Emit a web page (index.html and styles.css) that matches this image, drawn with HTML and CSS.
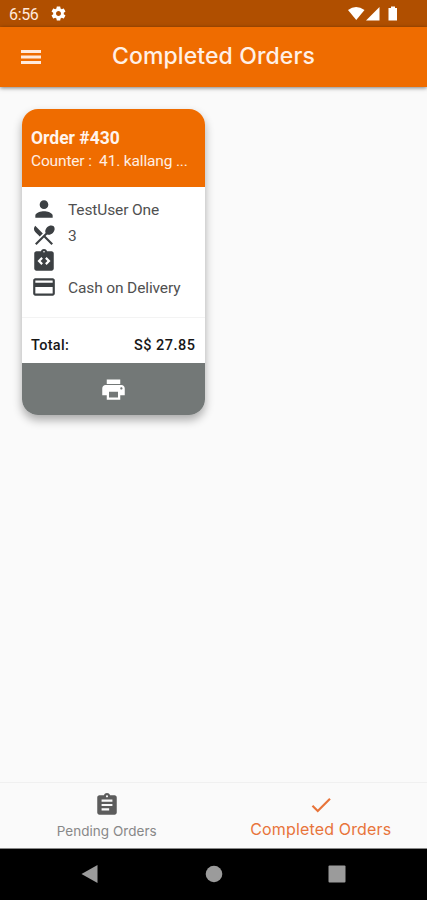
FILE: index.html
```html
<!DOCTYPE html>
<html lang="en">
<head>
<meta charset="utf-8">
<title>Completed Orders</title>
<link rel="stylesheet" href="styles.css">
</head>
<body>
<div class="status">
  <span class="clock">6:56</span>
  <svg class="gear" viewBox="0 0 24 24"><path d="M19.43 12.98c.04-.32.07-.64.07-.98s-.03-.66-.07-.98l2.11-1.65c.19-.15.24-.42.12-.64l-2-3.46c-.12-.22-.39-.3-.61-.22l-2.49 1c-.52-.4-1.08-.73-1.69-.98l-.38-2.65C14.46 2.18 14.25 2 14 2h-4c-.25 0-.46.18-.49.42l-.38 2.65c-.61.25-1.17.59-1.69.98l-2.49-1c-.23-.09-.49 0-.61.22l-2 3.46c-.13.22-.07.49.12.64l2.11 1.65c-.04.32-.07.65-.07.98s.03.66.07.98l-2.11 1.65c-.19.15-.24.42-.12.64l2 3.46c.12.22.39.3.61.22l2.49-1c.52.4 1.08.73 1.69.98l.38 2.65c.03.24.24.42.49.42h4c.25 0 .46-.18.49-.42l.38-2.65c.61-.25 1.17-.59 1.69-.98l2.49 1c.23.09.49 0 .61-.22l2-3.46c.12-.22.07-.49-.12-.64l-2.11-1.65zM12 15.500c-1.930 0-3.500-1.570-3.500-3.500s1.570-3.500 3.500-3.500 3.500 1.570 3.500 3.500-1.570 3.500-3.500 3.500z"/></svg>
  <svg class="signals" viewBox="0 0 50 16"><path d="M0 4Q8 -2 16.500 4L8.250 14Z"/><path d="M18 14.500L31.500 1V14.500Z"/><path d="M43 .5h4v1.500h2v12.500h-8.500V2h2.500z"/></svg>
</div>
<header class="appbar">
  <svg class="menu" viewBox="0 0 20 14"><path d="M0 0h20v3H0zM0 5.500h20v3H0zM0 11h20v3H0z"/></svg>
  <h1>Completed Orders</h1>
</header>
<main>
  <article class="card">
    <div class="card-head">
      <div class="order">Order #430</div>
      <div class="counter">Counter :&nbsp; 41. kallang ...</div>
    </div>
    <div class="details">
      <div class="row"><svg viewBox="0 0 24 24"><path d="M12 12c2.210 0 4-1.790 4-4s-1.790-4-4-4-4 1.790-4 4 1.790 4 4 4zm0 2c-2.670 0-8 1.340-8 4v2h16v-2c0-2.660-5.330-4-8-4z"/></svg><span>TestUser One</span></div>
      <div class="row"><svg viewBox="0 0 24 24"><path d="M8.100 13.340l2.830-2.830L3.910 3.500c-1.560 1.560-1.560 4.090 0 5.660l4.190 4.180zm6.780-1.810c1.530.71 3.680.21 5.270-1.380 1.910-1.910 2.280-4.650.81-6.120-1.460-1.460-4.200-1.100-6.120.81-1.590 1.590-2.090 3.740-1.380 5.270L3.700 19.870l1.410 1.410L12 14.410l6.880 6.880 1.410-1.410L13.410 13l1.470-1.470z"/></svg><span>3</span></div>
      <div class="row"><svg viewBox="0 0 24 24"><path fill-rule="evenodd" d="M19 3h-4.180C14.400 1.840 13.300 1 12 1s-2.400.84-2.820 2H5c-1.100 0-2 .9-2 2v14c0 1.100.9 2 2 2h14c1.100 0 2-.9 2-2V5c0-1.100-.9-2-2-2zM11 14.170L9.590 15.590 6 12l3.590-3.590L11 9.830 8.830 12zM12 4.250a.75.75 0 1 1 0-1.500.75.75 0 0 1 0 1.500zM14.410 15.590L13 14.170 15.170 12 13 9.830l1.410-1.420L18 12z"/></svg></div>
      <div class="row"><svg viewBox="0 0 24 24"><path d="M20 4H4c-1.110 0-1.990.89-1.990 2L2 18c0 1.110.89 2 2 2h16c1.110 0 2-.89 2-2V6c0-1.110-.89-2-2-2zm0 14H4v-6h16v6zm0-10H4V6h16v2z"/></svg><span>Cash on Delivery</span></div>
    </div>
    <div class="total"><span class="label">Total:</span><span class="amount">S$ 27.85</span></div>
    <div class="print"><svg viewBox="0 0 24 24"><path d="M19 8H5c-1.660 0-3 1.340-3 3v6h4v4h12v-4h4v-6c0-1.660-1.340-3-3-3zm-3 11H8v-5h8v5zm3-7c-.55 0-1-.45-1-1s.45-1 1-1 1 .45 1 1-.45 1-1 1zm-1-9H6v4h12V3z"/></svg></div>
  </article>
</main>
<nav class="tabs">
  <div class="tab"><svg viewBox="0 0 24 24"><path fill-rule="evenodd" d="M19 3h-4.180C14.400 1.840 13.300 1 12 1s-2.400.84-2.820 2H5c-1.100 0-2 .9-2 2v14c0 1.100.9 2 2 2h14c1.100 0 2-.9 2-2V5c0-1.100-.9-2-2-2zM12 3a1 1 0 1 1 0 2 1 1 0 0 1 0-2zM14 17H7v-2h7zM17 13H7v-2h10zM17 9H7V7h10z"/></svg><span>Pending Orders</span></div>
  <div class="tab active"><svg viewBox="0 0 24 24"><path d="M9 16.170L4.830 12l-1.420 1.410L9 19 21 7l-1.410-1.410z"/></svg><span>Completed Orders</span></div>
</nav>
<footer class="system">
  <svg viewBox="0 0 18 18"><path d="M.5 9L16.500 0V18Z"/></svg>
  <svg viewBox="0 0 18 18"><circle cx="9" cy="9" r="8.300"/></svg>
  <svg viewBox="0 0 18 18"><rect x=".5" y=".5" width="17" height="17" rx="1"/></svg>
</footer>
</body>
</html>
```
FILE: styles.css
```css
* { box-sizing: border-box; }
body { margin: 0; height: 900px; display: flex; flex-direction: column; background: #fafafa; font-family: Roboto, sans-serif; overflow: hidden; }
svg { display: block; fill: currentColor; flex: none; }
.status { height: 27px; background: #b04f00; color: #fff; display: flex; align-items: center; padding: 0 29px 0 9px; }
.clock { font-size: 16px; letter-spacing: -.35px; color: #ffe9dc; width: 41px; padding-top: 1px; }
.gear { width: 17px; height: 17px; }
.signals { width: 50px; height: 16px; margin-left: auto; }
.appbar { height: 60px; background: #ef6c00; color: #fff; display: flex; align-items: center; padding-left: 21px; box-shadow: 0 1px 4px rgba(0,0,0,.5); }
.menu { width: 20px; height: 14px; color: #ffeadd; }
h1 { margin: 0 0 2px 71px; font: 500 23px/30px Inter, sans-serif; letter-spacing: .1px; color: #fff0e6; white-space: nowrap; }
main { flex: 1; padding: 22px 0 0 22px; }
.card { width: 183px; height: 306px; border-radius: 16px; overflow: hidden; background: #fff; display: flex; flex-direction: column; box-shadow: 0 5px 10px rgba(0,0,0,.32); }
.card-head { height: 78px; background: #ef6c00; color: #ffeee3; padding: 18px 9px 0; white-space: nowrap; }
.order { font-size: 17.500px; line-height: 22px; font-weight: 700; color: #fff4ed; }
.counter { font-size: 15.500px; line-height: 22px; letter-spacing: -.16px; padding-top: 1px; }
.details { height: 131px; padding: 9px 9px 0; border-bottom: 1px solid #f3f3f3; }
.row { height: 26px; display: flex; align-items: center; color: #3c4043; font-size: 15.500px; }
.row svg { width: 26px; height: 26px; margin-right: 11px; }
.row span { color: #505050; white-space: nowrap; letter-spacing: -.13px; padding-top: 1px; }
.total { height: 45px; padding: 10px 10px 0 9px; display: flex; justify-content: space-between; align-items: center; font-size: 14.500px; font-weight: 500; color: #171717; }
.label { letter-spacing: .3px; }
.amount { letter-spacing: .5px; margin-right: -.5px; }
.print { height: 52px; background: #737877; color: #fff; display: flex; align-items: center; justify-content: center; }
.print svg { width: 27px; height: 27px; }
.tabs { height: 67px; border-top: 1px solid #f0f0f0; border-bottom: 1px solid #888; display: grid; grid-template-columns: 1fr 1fr; font-family: Inter, sans-serif; }
.tab { display: flex; flex-direction: column; align-items: center; padding-top: 9px; color: #5c5c5c; font-size: 13.500px; white-space: nowrap; }
.tab svg { width: 26px; height: 26px; }
.tab span { line-height: 20px; margin-top: 3px; color: #888; letter-spacing: .03px; }
.tab.active { color: #e8743a; font-size: 16px; padding-left: 1px; }
.tab.active span { margin-top: 1px; color: #e8743a; letter-spacing: .15px; }
.system { height: 51px; background: #000; color: #9b9b9b; display: flex; align-items: center; justify-content: space-between; padding: 0 81px 1px; }
.system svg { width: 18px; height: 18px; }
```
